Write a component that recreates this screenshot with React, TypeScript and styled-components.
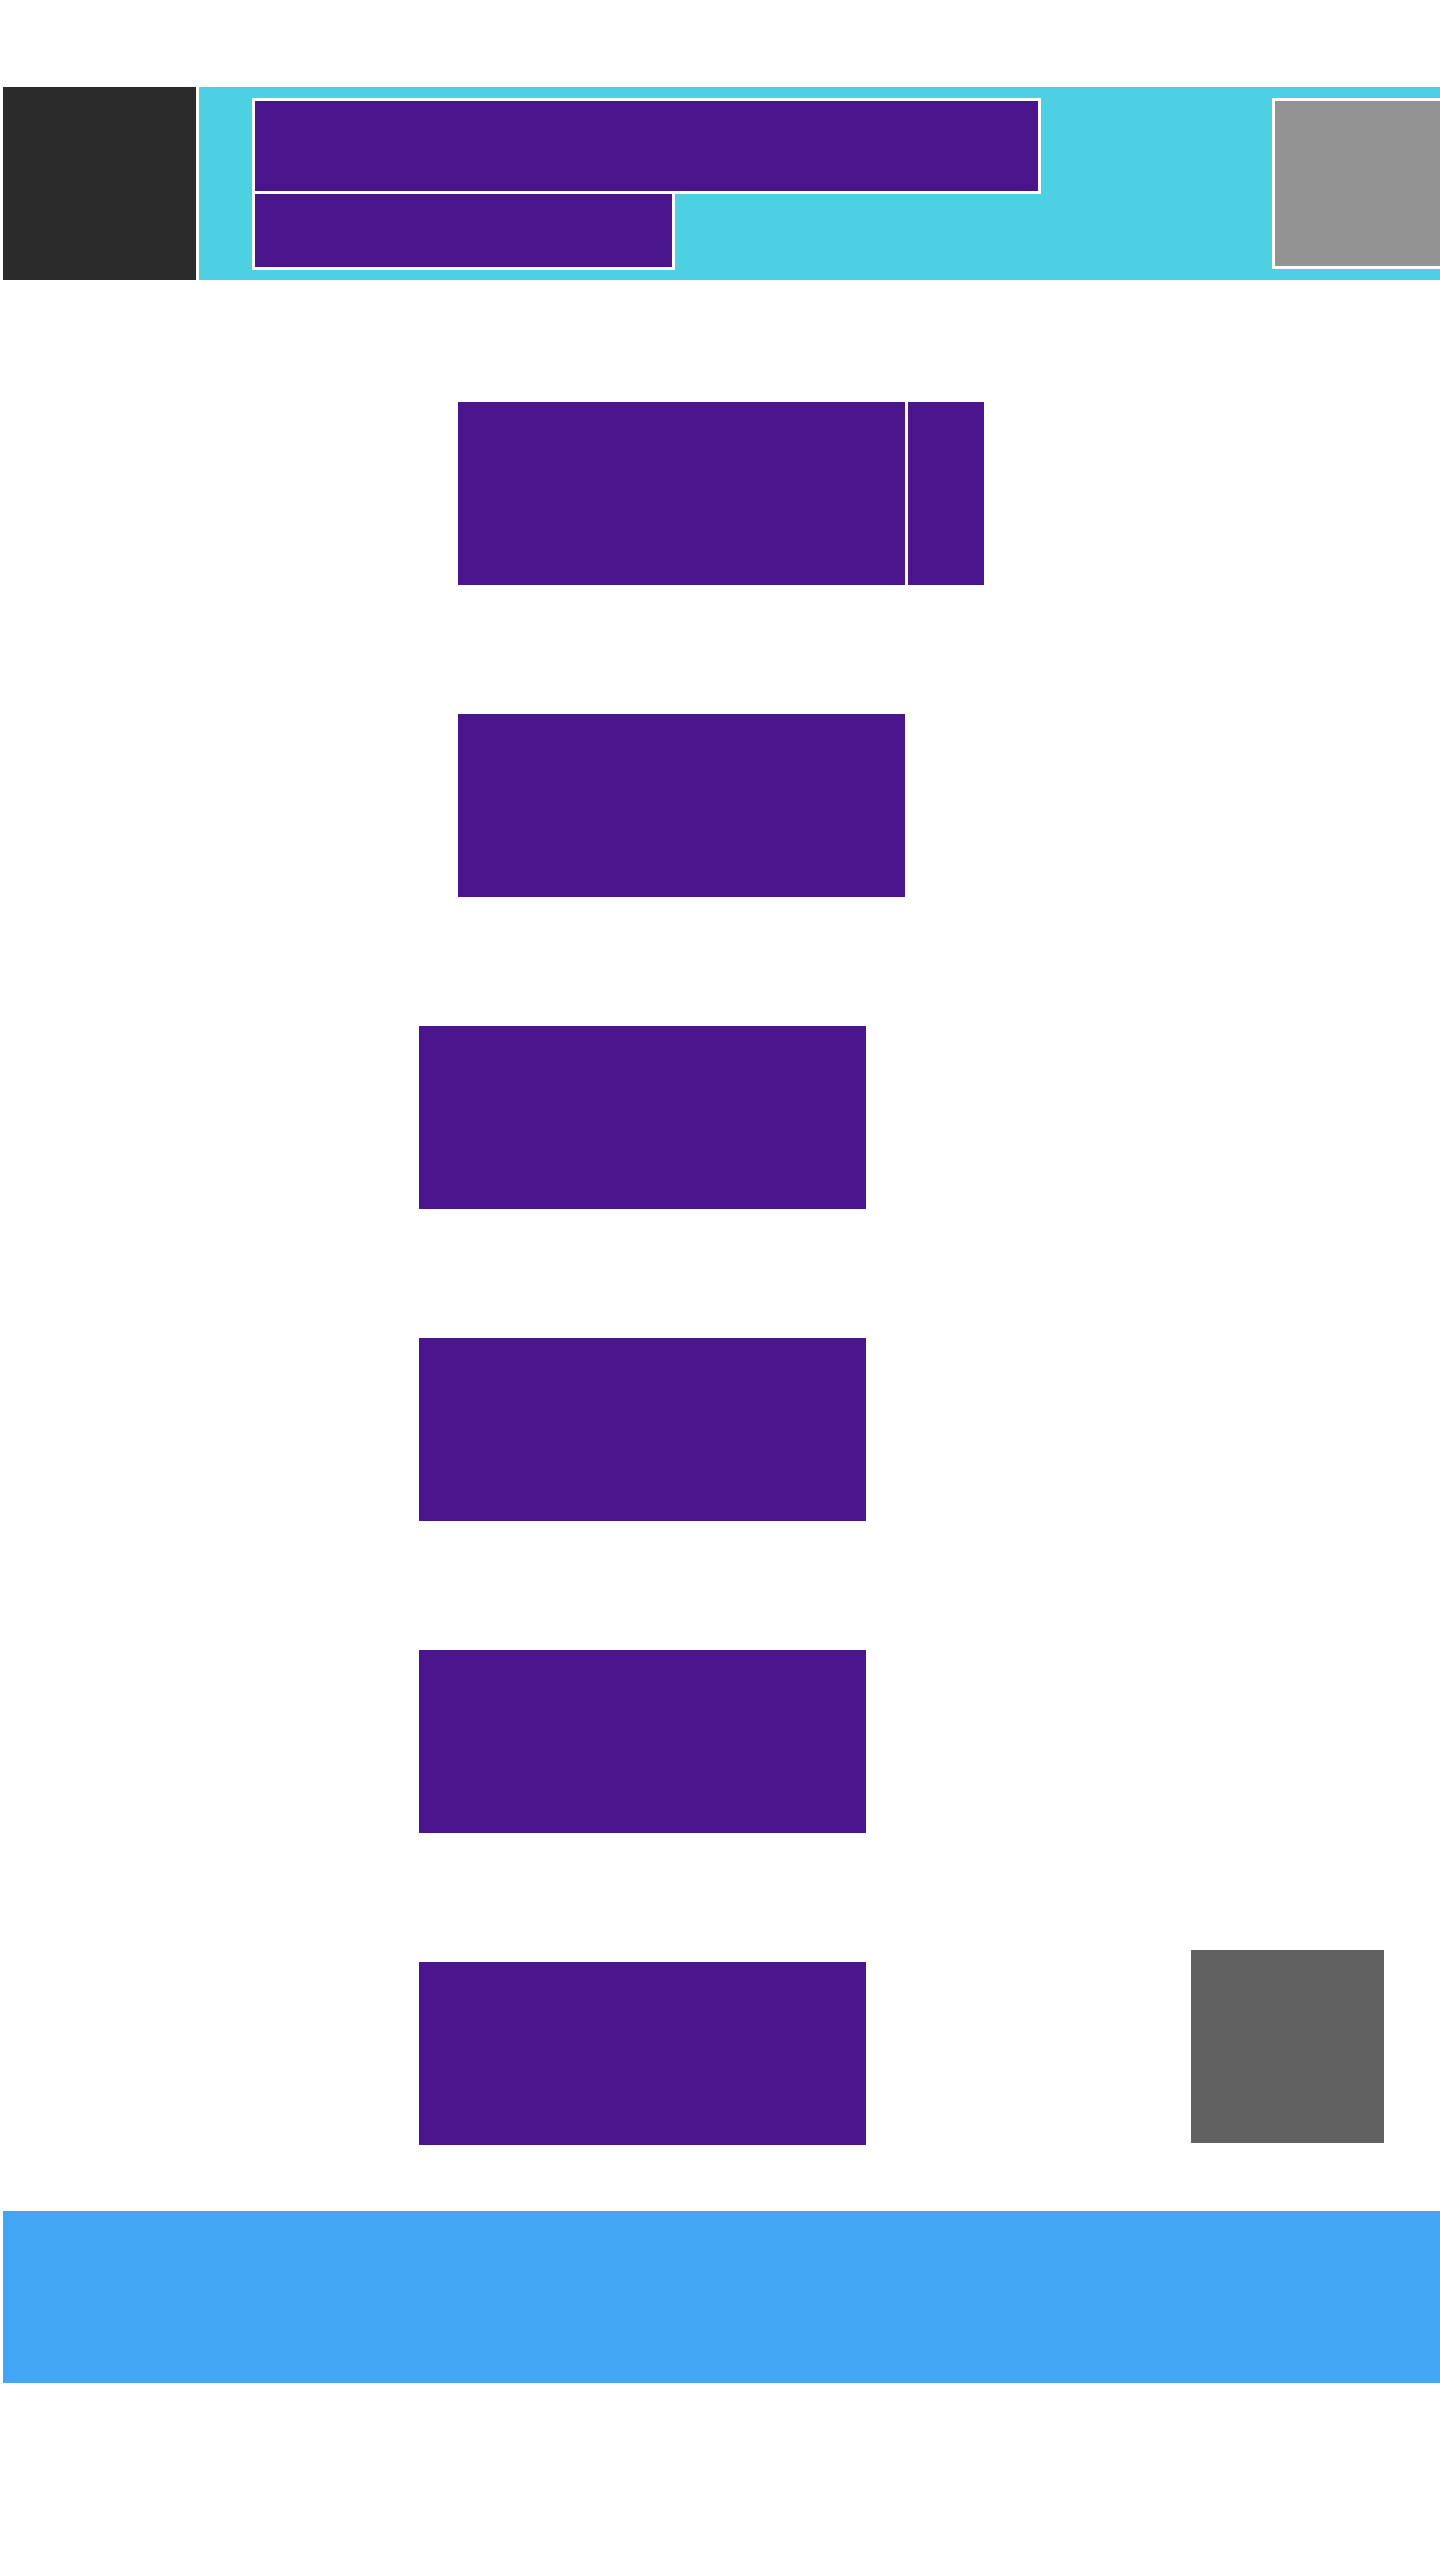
import styled, { createGlobalStyle } from "styled-components";

const GlobalStyle = createGlobalStyle`
  html, body {
    margin: 0;
    padding: 0;
    background: #ffffff;
    font-family: "Liberation Sans", Arial, sans-serif;
  }
`;

const Page = styled.div`
  padding: 87px 0 0 3px;
  width: 1440px;
  box-sizing: border-box;
  overflow: hidden;
`;

const Header = styled.header`
  display: flex;
  gap: 3px;
  height: 193px;
`;

const Logo = styled.div`
  width: 193px;
  height: 193px;
  flex-shrink: 0;
  background-color: #2b2b2b;
`;

const Toolbar = styled.div`
  flex: 1;
  display: flex;
  align-items: center;
  padding-left: 53px;
  background-color: #4dd0e1;
  overflow: hidden;
`;

const TitleGroup = styled.div`
  display: flex;
  flex-direction: column;
  flex-shrink: 0;
`;

const TitleBar = styled.div<{ $w: number; $h: number; $overlap?: boolean }>`
  width: ${(p) => p.$w}px;
  height: ${(p) => p.$h}px;
  box-sizing: border-box;
  border: 3px solid #ffffff;
  background-color: #4a148c;
  margin-top: ${(p) => (p.$overlap ? "-3px" : "0")};
`;

const Avatar = styled.div`
  width: 171px;
  height: 171px;
  flex-shrink: 0;
  box-sizing: border-box;
  border: 3px solid #ffffff;
  margin-left: 231px;
  background-color: #939393;
`;

const List = styled.main`
  display: flex;
  flex-direction: column;
  gap: 129px;
  margin-top: 122px;
`;

const Row = styled.div<{ $indent: number }>`
  display: flex;
  align-items: flex-start;
  gap: 3px;
  padding-left: ${(p) => p.$indent}px;
`;

const Card = styled.div<{ $w: number }>`
  width: ${(p) => p.$w}px;
  height: 183px;
  flex-shrink: 0;
  background-color: #4a148c;
`;

const Fab = styled.div`
  width: 193px;
  height: 193px;
  flex-shrink: 0;
  margin-left: 322px;
  margin-top: -12px;
  background-color: #616161;
`;

const Footer = styled.footer`
  height: 172px;
  margin-top: 66px;
  background-color: #42a5f5;
`;

const rows = [
  { indent: 455, cards: [447, 76] },
  { indent: 455, cards: [447] },
  { indent: 416, cards: [447] },
  { indent: 416, cards: [447] },
  { indent: 416, cards: [447] },
  { indent: 416, cards: [447], fab: true },
];

export default function App() {
  return (
    <>
      <GlobalStyle />
      <Page>
        <Header>
          <Logo />
          <Toolbar>
            <TitleGroup>
              <TitleBar $w={789} $h={96} />
              <TitleBar $w={423} $h={79} $overlap />
            </TitleGroup>
            <Avatar />
          </Toolbar>
        </Header>
        <List>
          {rows.map((row, i) => (
            <Row key={i} $indent={row.indent}>
              {row.cards.map((w, j) => (
                <Card key={j} $w={w} />
              ))}
              {row.fab && <Fab />}
            </Row>
          ))}
        </List>
        <Footer />
      </Page>
    </>
  );
}
